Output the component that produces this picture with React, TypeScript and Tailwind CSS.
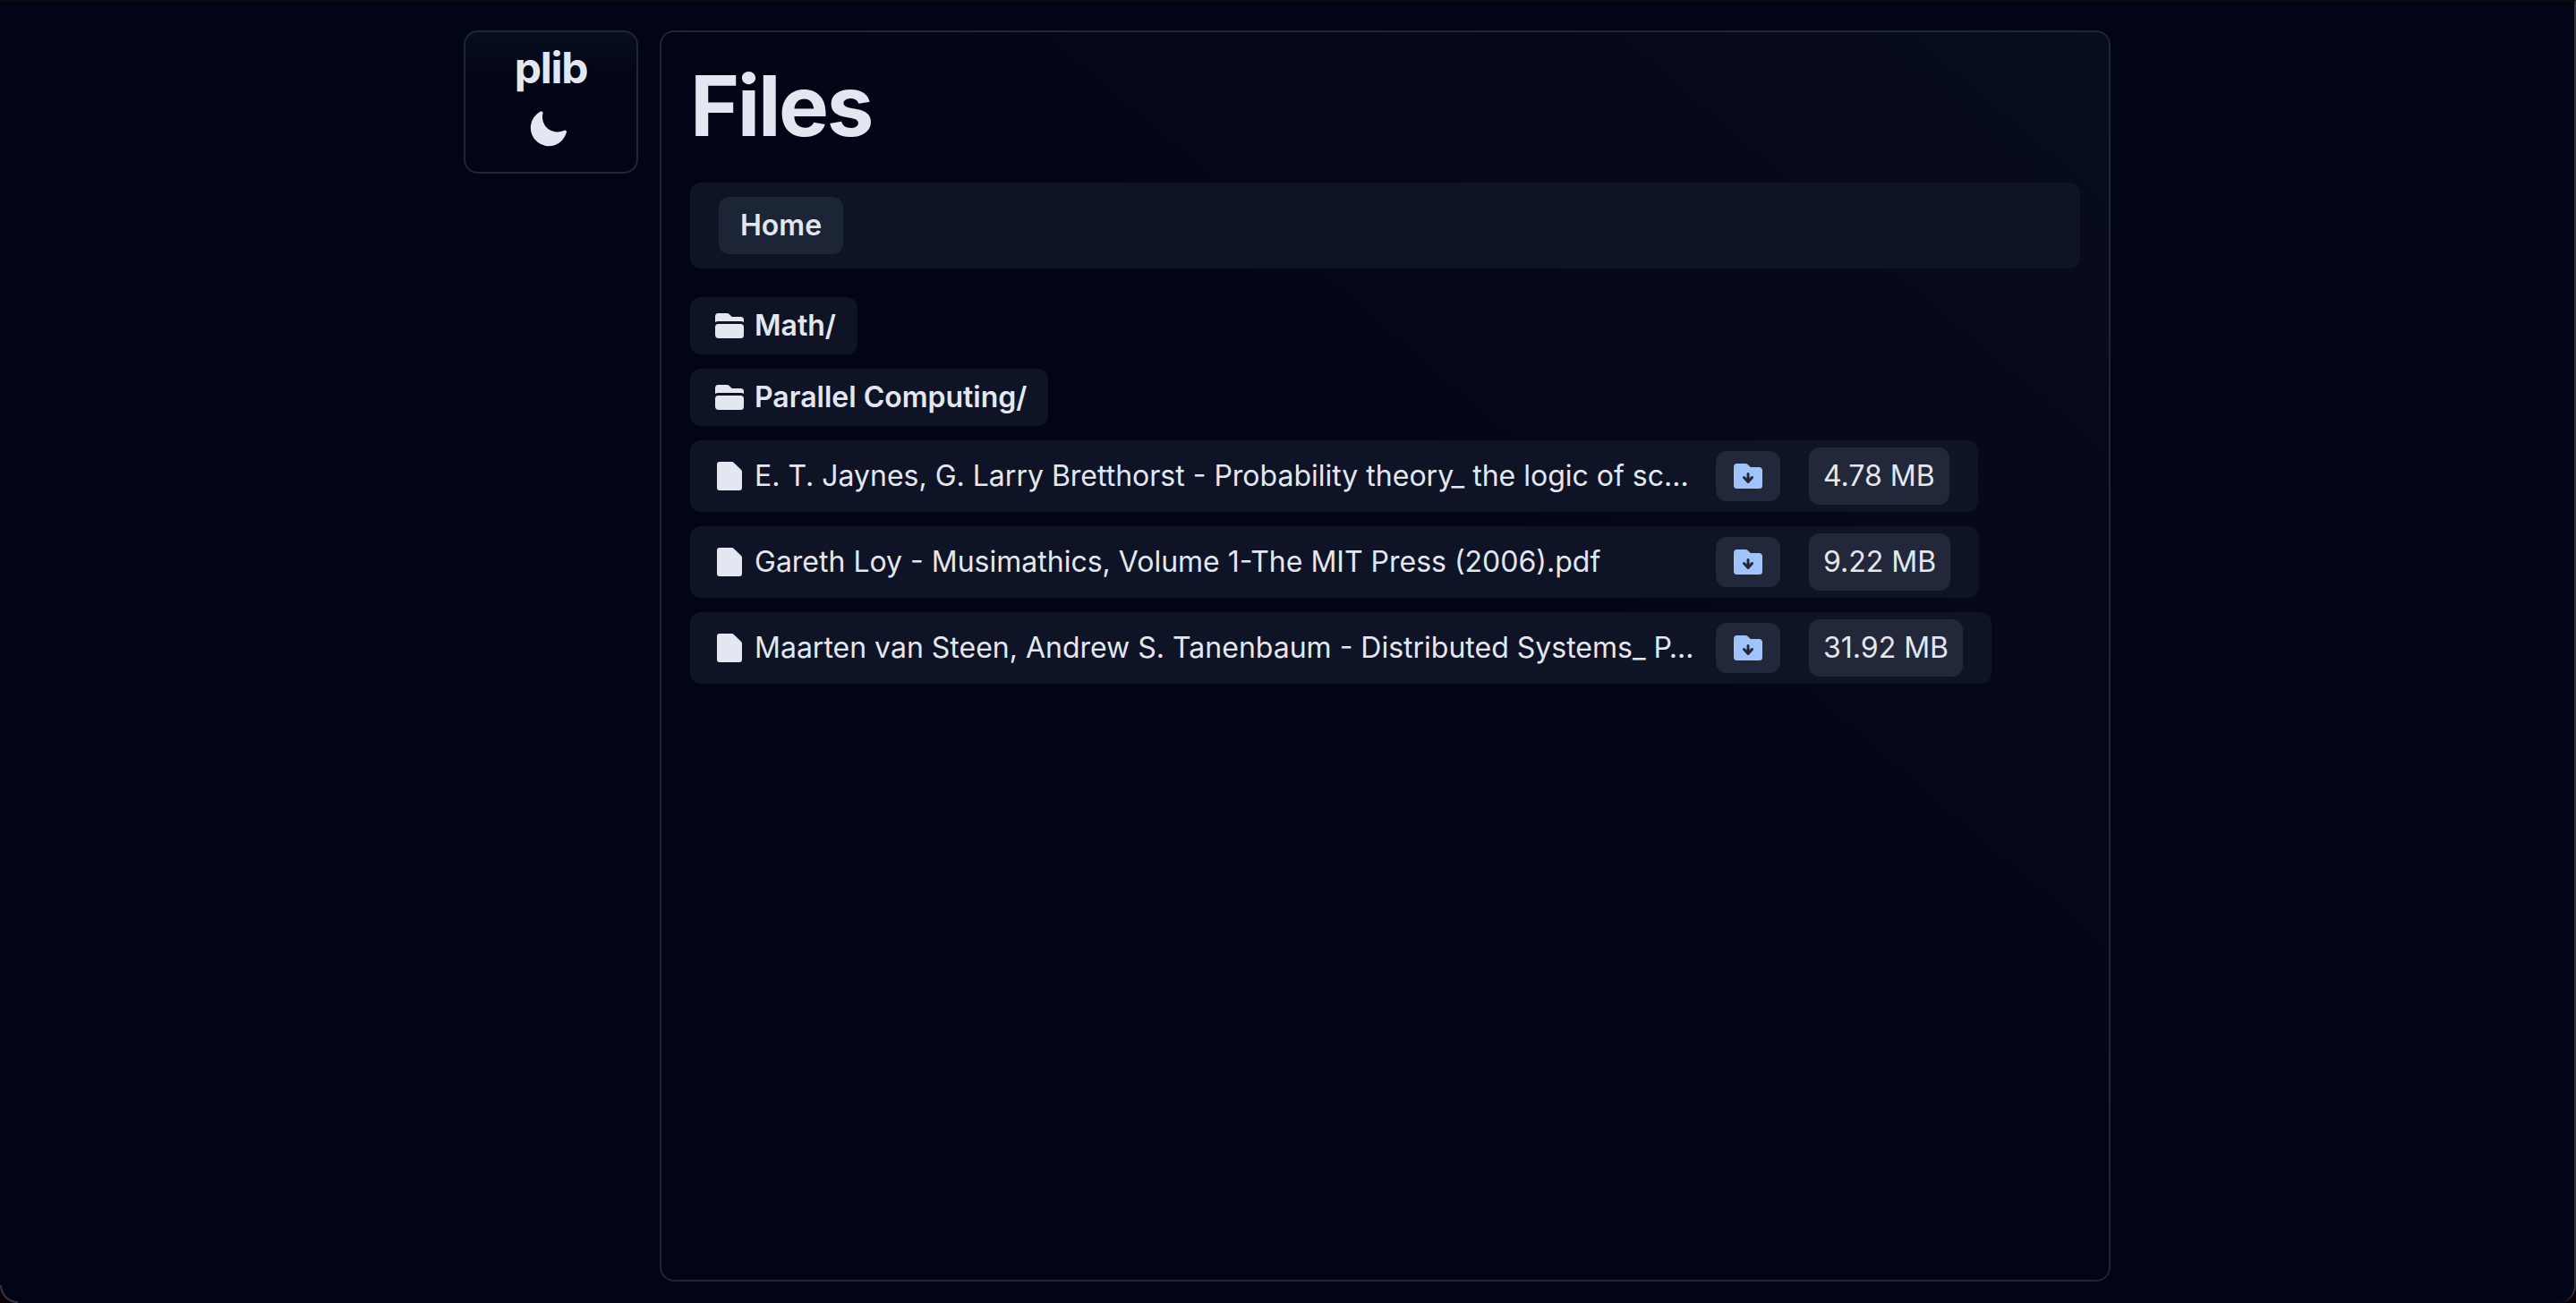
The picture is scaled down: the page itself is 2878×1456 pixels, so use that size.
import React from "react";
import {
  HiMiniDocument,
  HiMiniFolder,
  HiMiniFolderArrowDown,
  HiMiniMoon,
} from "react-icons/hi2";

type FileEntry = { name: string; size: string };

const folders: string[] = ["Math/", "Parallel Computing/"];

const files: FileEntry[] = [
  {
    name: "E. T. Jaynes, G. Larry Bretthorst - Probability theory_ the logic of sc…",
    size: "4.78 MB",
  },
  {
    name: "Gareth Loy - Musimathics, Volume 1-The MIT Press (2006).pdf",
    size: "9.22 MB",
  },
  {
    name: "Maarten van Steen, Andrew S. Tanenbaum - Distributed Systems_ P…",
    size: "31.92 MB",
  },
];

function Sidebar() {
  return (
    <header className="flex w-[195px] shrink-0 flex-col items-center gap-3 self-start rounded-2xl border-2 border-[#1f2637] bg-linear-to-b from-[#090e1d] to-[#020515] to-35% p-4">
      <a href="#" className="text-5xl leading-none font-bold tracking-tight">
        plib
      </a>
      <button type="button" aria-label="Toggle theme" className="mr-2 p-2">
        <HiMiniMoon className="size-12" />
      </button>
    </header>
  );
}

function FolderLink({ name }: { name: string }) {
  return (
    <li className="flex">
      <a
        href="#"
        className="flex h-16 items-center gap-2 rounded-xl bg-[#0e1325] px-6 font-semibold"
      >
        <HiMiniFolder className="size-10 shrink-0" />
        {name}
      </a>
    </li>
  );
}

function FileRow({ file }: { file: FileEntry }) {
  return (
    <li className="flex">
      <div className="flex h-20 min-w-0 items-center rounded-xl bg-[#0e1325] pr-8">
        <a href="#" className="flex w-[1146px] min-w-0 items-center gap-2 px-6">
          <HiMiniDocument className="size-10 shrink-0" />
          <span className="truncate">{file.name}</span>
        </a>
        <button
          type="button"
          aria-label={`Download ${file.name}`}
          className="mr-8 shrink-0 rounded-xl bg-[#22283a] px-4 py-2 text-[#a0c4fa]"
        >
          <HiMiniFolderArrowDown className="size-10" />
        </button>
        <span className="flex h-16 shrink-0 items-center rounded-xl bg-[#22283a] px-4">
          {file.size}
        </span>
      </div>
    </li>
  );
}

export default function App() {
  return (
    <div className="min-h-screen bg-[#050008] font-[Inter,sans-serif] text-[32px] leading-10 text-[#e3e7f1]">
      <div className="relative flex min-h-screen justify-center rounded-b-[20px] border-t-2 border-r-2 border-t-[#0b0c0d] border-r-[#35363f] bg-[#020515] pt-8 pb-6">
        <span
          aria-hidden="true"
          className="absolute bottom-0 left-0 size-5 rounded-bl-[20px] border-b-2 border-l-2 border-[#35363f]"
        />
        <div className="flex w-full max-w-[1840px] gap-6">
          <Sidebar />
          <main className="flex min-w-0 flex-1 flex-col rounded-2xl border-2 border-[#1f2637] bg-linear-to-tr from-[#020515] from-50% via-[#070a19] via-85% to-[#070e1c] p-8">
            <h1 className="mb-9 text-[94px] leading-[100px] font-bold tracking-tight">Files</h1>
            <nav aria-label="Breadcrumb" className="mb-8 flex rounded-xl bg-[#0e1425] px-8 py-4">
              <a
                href="#"
                className="flex h-16 items-center rounded-xl bg-[#1c2535] px-6 font-semibold"
              >
                Home
              </a>
            </nav>
            <ul className="flex flex-col gap-4">
              {folders.map((name) => (
                <FolderLink key={name} name={name} />
              ))}
              {files.map((file) => (
                <FileRow key={file.name} file={file} />
              ))}
            </ul>
          </main>
        </div>
      </div>
    </div>
  );
}
